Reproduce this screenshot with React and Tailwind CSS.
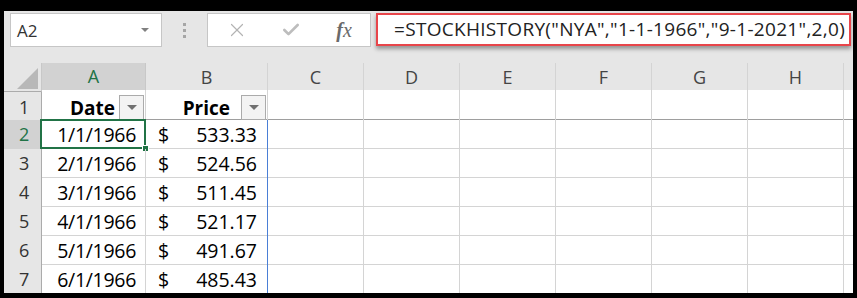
import { X, Check } from "lucide-react"

const COLS = ["A", "B", "C", "D", "E", "F", "G", "H"]

const ROWS = [
  ["1/1/1966", "533.33"],
  ["2/1/1966", "524.56"],
  ["3/1/1966", "511.45"],
  ["4/1/1966", "521.17"],
  ["5/1/1966", "491.67"],
  ["6/1/1966", "485.43"],
]

const grid = "grid grid-cols-[38px_104px_122px_96px_96px_96px_96px_96px_96px_1fr]"
const font = { fontFamily: "'Open Sans', 'Liberation Sans', sans-serif" }

function FilterBtn() {
  return (
    <div className="w-[25px] h-[25px] mt-[2px] border border-[#ababab] bg-[#f3f3f3] flex items-center justify-center">
      <div className="w-0 h-0 border-l-[5px] border-r-[5px] border-t-[5px] border-l-transparent border-r-transparent border-t-[#707070]" />
    </div>
  )
}

export default function App() {
  return (
    <div className="w-[857px] h-[298px] bg-black pt-[11px] pl-[4px] pr-[4px] pb-[5px]" style={font}>
      <div className="w-full h-full bg-[#e6e6e6] flex flex-col overflow-hidden">
        {/* formula bar */}
        <div className="h-[52px] shrink-0 flex items-start pt-[2px] pl-[6px]">
          <div className="w-[152px] h-[34px] bg-white border border-[#c6c6c6] flex items-center pl-[6px] pr-[12px]">
            <span className="text-[17px] text-[#333] flex-1 leading-none">A2</span>
            <div className="w-0 h-0 border-l-[4px] border-r-[4px] border-t-[4px] border-l-transparent border-r-transparent border-t-[#808080]" />
          </div>
          <div className="w-[45px] h-[34px] flex flex-col items-center justify-center gap-[3px]">
            <div className="w-[3px] h-[3px] bg-[#a6a6a6]" />
            <div className="w-[3px] h-[3px] bg-[#a6a6a6]" />
            <div className="w-[3px] h-[3px] bg-[#a6a6a6]" />
          </div>
          <div className="w-[164px] h-[34px] bg-white border border-[#c6c6c6] flex items-center">
            <div className="w-[56px] flex justify-center pl-[2px]">
              <X size={22} strokeWidth={1.3} color="#b3b3b3" />
            </div>
            <div className="w-[54px] flex justify-center">
              <Check size={20} strokeWidth={3.2} color="#bdbdbd" />
            </div>
            <div className="w-[52px] flex justify-center">
              <span className="text-[20px] italic text-[#6a6a6a] leading-none" style={{ fontFamily: "'Liberation Serif', serif" }}>
                <span className="font-semibold">f</span>x
              </span>
            </div>
          </div>
          <div className="ml-[5px] w-[475px] h-[33px] bg-white border-2 border-[#e8454a] shadow-[0_3px_4px_rgba(0,0,0,0.35)] flex items-center pl-[16px] overflow-hidden whitespace-nowrap">
            <span className="text-[19px] text-[#222] leading-none tracking-[0.3px]">
              =STOCKHISTORY("NYA","1-1-1966","9-1-2021",2,0)
            </span>
          </div>
        </div>

        {/* column headers */}
        <div className={`${grid} h-[27px] shrink-0 bg-[#e6e6e6]`}>
          <div className="relative border-r border-[#c8c8c8] border-b border-b-[#ababab]">
            <svg className="absolute right-[3px] bottom-[2px]" width="21" height="21">
              <polygon points="21,0 21,21 0,21" fill="#b8b8b8" />
            </svg>
          </div>
          {COLS.map((c) => (
            <div
              key={c}
              className={
                c === "A"
                  ? "bg-[#d2d2d2] border-r border-[#c8c8c8] border-b-2 border-b-[#217346] text-[#217346] flex items-center justify-center text-[18px]"
                  : "border-r border-[#d4d4d4] border-b border-b-[#ababab] text-[#444] flex items-center justify-center text-[18px]"
              }
            >
              {c}
            </div>
          ))}
          <div className="border-b border-b-[#ababab]" />
        </div>

        {/* sheet rows */}
        <div className="flex-1 bg-white">
          {/* row 1 */}
          <div className={`${grid} h-[30px] border-b border-[#9e9e9e]`}>
            <div className="bg-[#e6e6e6] border-r border-[#ababab] flex items-center pl-[15px] pt-[2px] text-[18px] text-[#333]">1</div>
            <div className="border-r border-[#d4d4d4] flex items-center justify-end pr-[1px] gap-[4px]">
              <span className="text-[19px] font-bold text-black pt-[4px]">Date</span>
              <FilterBtn />
            </div>
            <div className="border-r border-[#d4d4d4] flex items-center justify-end pr-[1px] gap-[11px]">
              <span className="text-[19px] font-bold text-black pt-[4px]">Price</span>
              <FilterBtn />
            </div>
            {[0, 1, 2, 3, 4, 5].map((i) => (
              <div key={i} className="border-r border-[#d4d4d4]" />
            ))}
            <div />
          </div>

          {ROWS.map(([d, p], i) => {
            const sel = i === 0
            return (
              <div key={d} className={`${grid} h-[29px] border-b border-[#d4d4d4]`}>
                <div
                  className={
                    sel
                      ? "bg-[#d2d2d2] border-r-2 border-[#217346] flex items-center pl-[15px] text-[18px] text-[#217346]"
                      : "bg-[#e6e6e6] border-r border-[#ababab] flex items-center pl-[15px] text-[18px] text-[#333]"
                  }
                >
                  {i + 2}
                </div>
                <div className="relative border-r border-[#d4d4d4] flex items-center justify-end pr-[9px] text-[19.5px] tracking-[-0.3px] text-black">
                  {sel && (
                    <div className="absolute -left-[2px] -top-[1px] w-[106px] h-[30px] border-2 border-[#217346]">
                      <div className="absolute -right-[5px] -bottom-[5px] w-[7px] h-[7px] bg-[#217346] border border-white" />
                    </div>
                  )}
                  {d}
                </div>
                <div className="border-r border-[#4a7fd6] flex items-center justify-between pl-[12px] pr-[10px] text-[19.5px] text-black">
                  <span>$</span>
                  <span>{p}</span>
                </div>
                {[0, 1, 2, 3, 4, 5].map((k) => (
                  <div key={k} className="border-r border-[#d4d4d4]" />
                ))}
                <div />
              </div>
            )
          })}
        </div>
      </div>
    </div>
  )
}
